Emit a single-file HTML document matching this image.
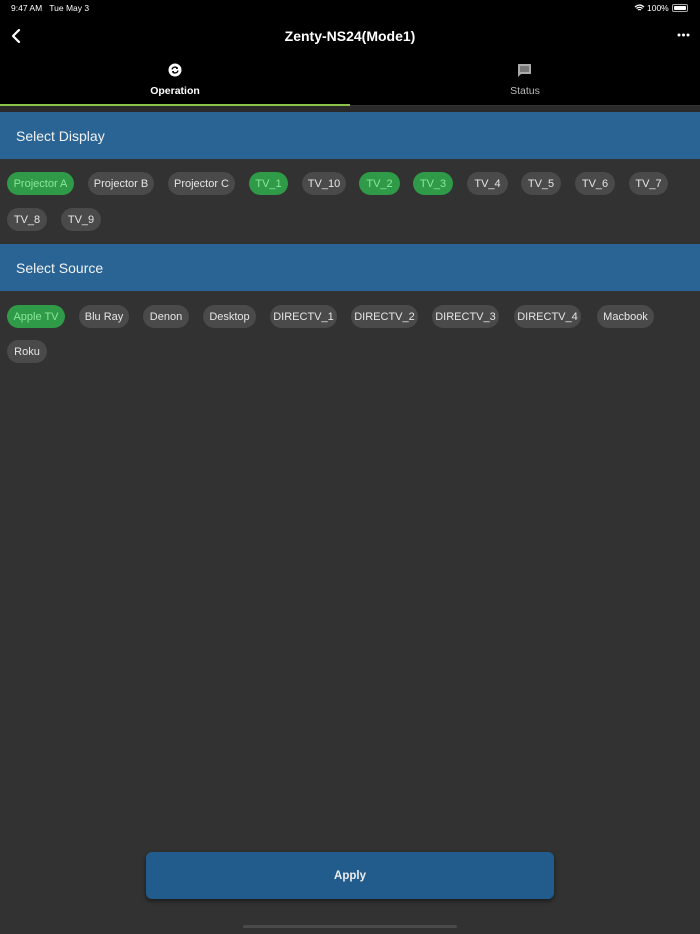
<!DOCTYPE html>
<html><head><meta charset="utf-8"><style>
*{margin:0;padding:0;box-sizing:border-box}
body{width:700px;height:934px;background:#323232;font-family:"Liberation Sans",sans-serif;position:relative;overflow:hidden;color:#fff}
.abs{position:absolute}
.hdr{left:0;top:0;width:700px;height:105px;background:#000}
.chip{position:absolute;height:23px;border-radius:12px;background:#4a4a4a;color:#e6e6e6;font-size:11px;line-height:24px;text-align:center;white-space:nowrap}
.on{background:#2f9a47;color:#8be89b}
.ban{left:0;width:700px;height:47px;background:#296494;font-size:14px;line-height:48px;padding-left:16px;color:#f2f2f2}
</style></head><body>
<div class="abs hdr"></div>
<div class="abs" style="left:11px;top:3px;font-size:8.5px;color:#fff">9:47 AM&nbsp;&nbsp;&nbsp;Tue May 3</div>
<div class="abs" style="left:647px;top:3px;font-size:8.5px;color:#fff">100%</div>
<svg class="abs" style="left:634px;top:4px" width="11" height="8" viewBox="0 0 11 8"><path d="M1 3 Q5.5 -1 10 3 M2.5 4.5 Q5.5 2 8.5 4.5 M4 6 Q5.5 5 7 6" stroke="#fff" stroke-width="1.3" fill="none"/></svg>
<div class="abs" style="left:672px;top:4px;width:16px;height:8px;border:1px solid #aaa;border-radius:2px;padding:1px"><div style="width:100%;height:100%;background:#fff;border-radius:1px"></div></div>
<svg class="abs" style="left:10px;top:28px" width="12" height="16" viewBox="0 0 12 16"><path d="M9 2 L3 8 L9 14" stroke="#fff" stroke-width="2.2" fill="none" stroke-linecap="round" stroke-linejoin="round"/></svg>
<div class="abs" style="left:0;width:700px;top:28px;text-align:center;font-size:14px;font-weight:bold;color:#fff">Zenty-NS24(Mode1)</div>
<svg class="abs" style="left:677px;top:33px" width="13" height="4" viewBox="0 0 13 4"><circle cx="2" cy="2" r="1.5" fill="#fff"/><circle cx="6.5" cy="2" r="1.5" fill="#fff"/><circle cx="11" cy="2" r="1.5" fill="#fff"/></svg>
<svg class="abs" style="left:168px;top:63px" width="14" height="14" viewBox="0 0 14 14"><circle cx="7" cy="7" r="6.5" fill="#fff"/><path d="M4 6.5 A3 3 0 0 1 9.5 5.5 M10 7.5 A3 3 0 0 1 4.5 8.5" stroke="#000" stroke-width="1.3" fill="none"/><path d="M9 3.8 L10 6 L7.8 6 Z M5 10.2 L4 8 L6.2 8Z" fill="#000"/></svg>
<div class="abs" style="left:0;width:350px;top:85px;text-align:center;font-size:10.5px;font-weight:bold;color:#fff">Operation</div>
<svg class="abs" style="left:517px;top:63px" width="15" height="15" viewBox="0 0 15 15"><path d="M1 1 H14 V11 H4 L1 14 Z" fill="#aaa"/><rect x="3" y="3" width="9" height="6" fill="#777"/></svg>
<div class="abs" style="left:350px;width:350px;top:85px;text-align:center;font-size:10.5px;color:#bbb">Status</div>
<div class="abs" style="left:0;top:104px;width:350px;height:2px;background:#8bc34a"></div>
<div class="abs" style="left:0;top:106px;width:700px;height:6px;background:#2a2a2a"></div>
<div class="abs ban" style="top:112px">Select Display</div>
<div class="chip on" style="left:7px;top:172px;width:67px">Projector A</div>
<div class="chip" style="left:88px;top:172px;width:66px">Projector B</div>
<div class="chip" style="left:168px;top:172px;width:67px">Projector C</div>
<div class="chip on" style="left:249px;top:172px;width:39px">TV_1</div>
<div class="chip" style="left:302px;top:172px;width:44px">TV_10</div>
<div class="chip on" style="left:359px;top:172px;width:41px">TV_2</div>
<div class="chip on" style="left:413px;top:172px;width:40px">TV_3</div>
<div class="chip" style="left:467px;top:172px;width:41px">TV_4</div>
<div class="chip" style="left:521px;top:172px;width:40px">TV_5</div>
<div class="chip" style="left:575px;top:172px;width:40px">TV_6</div>
<div class="chip" style="left:629px;top:172px;width:39px">TV_7</div>
<div class="chip" style="left:7px;top:208px;width:40px">TV_8</div>
<div class="chip" style="left:61px;top:208px;width:40px">TV_9</div>
<div class="abs ban" style="top:244px">Select Source</div>
<div class="chip on" style="left:7px;top:305px;width:58px">Apple TV</div>
<div class="chip" style="left:79px;top:305px;width:50px">Blu Ray</div>
<div class="chip" style="left:143px;top:305px;width:46px">Denon</div>
<div class="chip" style="left:203px;top:305px;width:53px">Desktop</div>
<div class="chip" style="left:270px;top:305px;width:67px">DIRECTV_1</div>
<div class="chip" style="left:351px;top:305px;width:67px">DIRECTV_2</div>
<div class="chip" style="left:432px;top:305px;width:67px">DIRECTV_3</div>
<div class="chip" style="left:514px;top:305px;width:67px">DIRECTV_4</div>
<div class="chip" style="left:597px;top:305px;width:57px">Macbook</div>
<div class="chip" style="left:7px;top:340px;width:40px">Roku</div>
<div class="abs" style="left:146px;top:852px;width:408px;height:47px;background:#225c8c;border-radius:6px;box-shadow:0 2px 4px rgba(0,0,0,.5);text-align:center;line-height:48px;font-size:11.5px;font-weight:bold;color:#eee">Apply</div>
<div class="abs" style="left:243px;top:925px;width:214px;height:3px;border-radius:2px;background:#4a4a4a"></div>
</body></html>
